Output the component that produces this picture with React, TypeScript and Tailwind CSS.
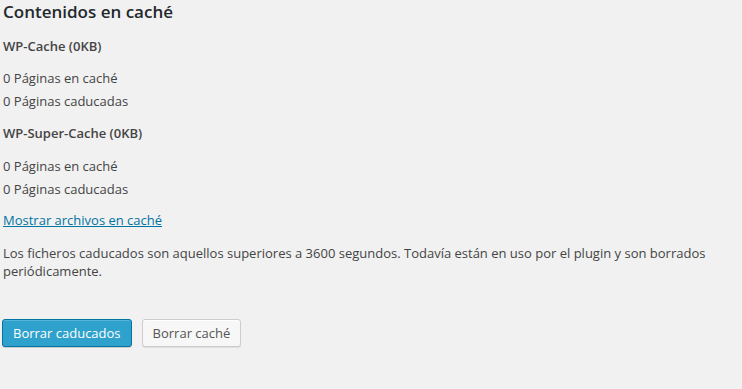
import React from "react";

export default function App() {
  return (
    <div
      className="w-[742px] h-[389px] bg-[#f1f1f1] text-[#444] text-[13px] overflow-hidden"
      style={{ fontFamily: '"Open Sans", sans-serif' }}
    >
      <div className="pl-[3px] pr-[20px]">
        <h2 className="text-[17px] leading-[24px] font-semibold text-[#23282d] m-0">
          Contenidos en caché
        </h2>
        <div className="mt-[12px] leading-[20px] font-semibold">WP-Cache (0KB)</div>
        <div className="mt-[11px] leading-[23px]">
          <div>0 Páginas en caché</div>
          <div>0 Páginas caducadas</div>
        </div>
        <div className="mt-[10px] leading-[20px] font-semibold">WP-Super-Cache (0KB)</div>
        <div className="mt-[12px] leading-[23px]">
          <div>0 Páginas en caché</div>
          <div>0 Páginas caducadas</div>
        </div>
        <div className="mt-[9px] leading-[20px]">
          <a href="#" className="text-[#0074a2] underline">
            Mostrar archivos en caché
          </a>
        </div>
        <p className="mt-[14px] leading-[18px]">
          Los ficheros caducados son aquellos superiores a 3600 segundos. Todavía están en uso por el plugin y son borrados periódicamente.
        </p>
        <div className="mt-[39px] flex gap-[10px] -ml-[1px]">
          <button className="h-[28px] px-[10px] rounded-[3px] border border-[#0074a2] bg-[#2ea2cc] text-white text-[13px] leading-[26px] shadow-[inset_0_1px_0_rgba(120,200,230,0.5),0_1px_0_rgba(0,0,0,0.15)]">
            Borrar caducados
          </button>
          <button className="h-[28px] px-[10px] rounded-[3px] border border-[#cccccc] bg-[#f7f7f7] text-[#555] text-[13px] leading-[26px] shadow-[inset_0_1px_0_#fff,0_1px_0_rgba(0,0,0,0.08)]">
            Borrar caché
          </button>
        </div>
      </div>
    </div>
  );
}
